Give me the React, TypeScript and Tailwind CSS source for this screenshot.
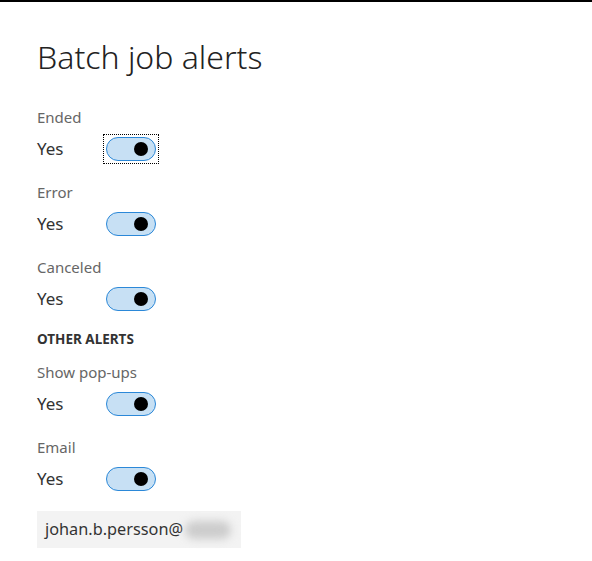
import React from 'react';

function Toggle({ focused = false }: { focused?: boolean }) {
  return (
    <div className={focused ? 'outline outline-1 outline-dotted outline-black outline-offset-[2px]' : ''}>
      <div className="w-[50px] h-[24px] rounded-full bg-[#c7e0f4] border border-[#2b88d8] flex items-center justify-end pr-[7px]">
        <div className="w-[14px] h-[14px] rounded-full bg-black" />
      </div>
    </div>
  );
}

function AlertItem({ label, focused = false }: { label: string; focused?: boolean }) {
  return (
    <div>
      <div className="h-[20px] leading-[20px] text-[15px] text-[#666666]">{label}</div>
      <div className="mt-[10px] h-[24px] flex items-center">
        <span className="w-[69px] text-[17px] text-[#333333]">Yes</span>
        <Toggle focused={focused} />
      </div>
    </div>
  );
}

export default function App() {
  return (
    <div className="w-[592px] h-[561px] bg-white border-t-2 border-black pl-[37px]" style={{ fontFamily: '"Noto Sans", "Open Sans", sans-serif' }}>
      <h1 className="mt-[31px] h-[48px] leading-[48px] text-[32px] font-light text-[#222222]">Batch job alerts</h1>

      <div className="mt-[26px] flex flex-col gap-[21px]">
        <AlertItem label="Ended" focused />
        <AlertItem label="Error" />
        <AlertItem label="Canceled" />
      </div>

      <div className="mt-[18px] h-[20px] leading-[20px] text-[13.5px] font-bold text-[#333333]">OTHER ALERTS</div>

      <div className="mt-[13px] flex flex-col gap-[21px]">
        <AlertItem label="Show pop-ups" />
        <AlertItem label="Email" />
      </div>

      <div className="mt-[20px] w-[204px] h-[37px] bg-[#f3f3f3] flex items-center pl-[8px] text-[16.3px] text-[#333333]">
        <span>johan.b.persson@</span>
        <span className="ml-[2px] w-[46px] h-[18px] rounded-full bg-[#cccccc] blur-[4px]" />
      </div>
    </div>
  );
}
